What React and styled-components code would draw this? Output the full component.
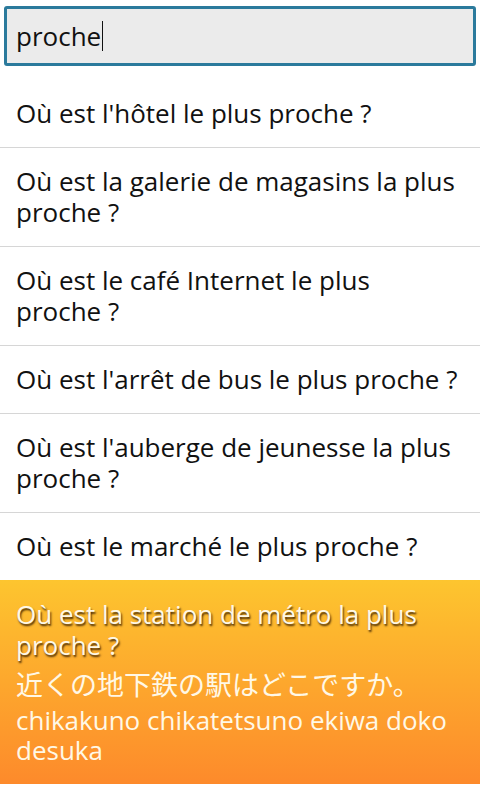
import React from 'react';
import styled, { createGlobalStyle } from 'styled-components';

const Global = createGlobalStyle`
  html, body {
    margin: 0;
    padding: 0;
    background: #ffffff;
  }
  body {
    font-family: "Open Sans", "Noto Sans", "Noto Sans CJK JP", sans-serif;
  }
`;

const Screen = styled.div`
  width: 480px;
  height: 800px;
  overflow: hidden;
  background: #ffffff;
  display: flex;
  flex-direction: column;
`;

const SearchBar = styled.div`
  padding: 6px 4px 14px 4px;
`;

const SearchBox = styled.div`
  height: 54px;
  border: 3px solid #2b7a9c;
  border-radius: 3px;
  background: #ebebeb;
  display: flex;
  align-items: center;
  padding: 0 9px;
  font-size: 26px;
  color: #111;
`;

const Caret = styled.span`
  display: inline-block;
  width: 1px;
  height: 30px;
  background: #111;
  margin-left: 1px;
`;

const List = styled.div`
  display: flex;
  flex-direction: column;
`;

const Row = styled.div`
  padding: 18px 16px 18px 16px;
  border-top: ${p => (p.$first ? 'none' : '1px solid #d6d6d6')};
  font-size: 26px;
  line-height: 31px;
  color: #111;
`;

const Selected = styled.div`
  padding: 19px 16px 19px 16px;
  background: linear-gradient(to bottom, #fdc52f, #fd8a2b);
  color: #fff8e6;
  font-size: 26px;
  line-height: 31px;
`;

const Title = styled.div`
  text-shadow: 1px 2px 2px rgba(50, 25, 0, 0.9);
`;

const Japanese = styled.div`
  font-family: "Noto Sans CJK JP", sans-serif;
  font-size: 27px;
  line-height: 42px;
  margin-top: 2px;
`;

const Romaji = styled.div`
  line-height: 30px;
`;

const NB = '\u00a0';

const items = [
  `Où est l'hôtel le plus proche${NB}?`,
  `Où est la galerie de magasins la plus proche${NB}?`,
  `Où est le café Internet le plus proche${NB}?`,
  `Où est l'arrêt de bus le plus proche${NB}?`,
  `Où est l'auberge de jeunesse la plus proche${NB}?`,
  `Où est le marché le plus proche${NB}?`,
];

export default function App() {
  return (
    <Screen>
      <Global />
      <SearchBar>
        <SearchBox>
          proche<Caret />
        </SearchBox>
      </SearchBar>
      <List>
        {items.map((t, i) => (
          <Row key={t} $first={i === 0}>{t}</Row>
        ))}
        <Selected>
          <Title>{`Où est la station de métro la plus proche${NB}?`}</Title>
          <Japanese>近くの地下鉄の駅はどこですか。</Japanese>
          <Romaji>chikakuno chikatetsuno ekiwa doko desuka</Romaji>
        </Selected>
      </List>
    </Screen>
  );
}
